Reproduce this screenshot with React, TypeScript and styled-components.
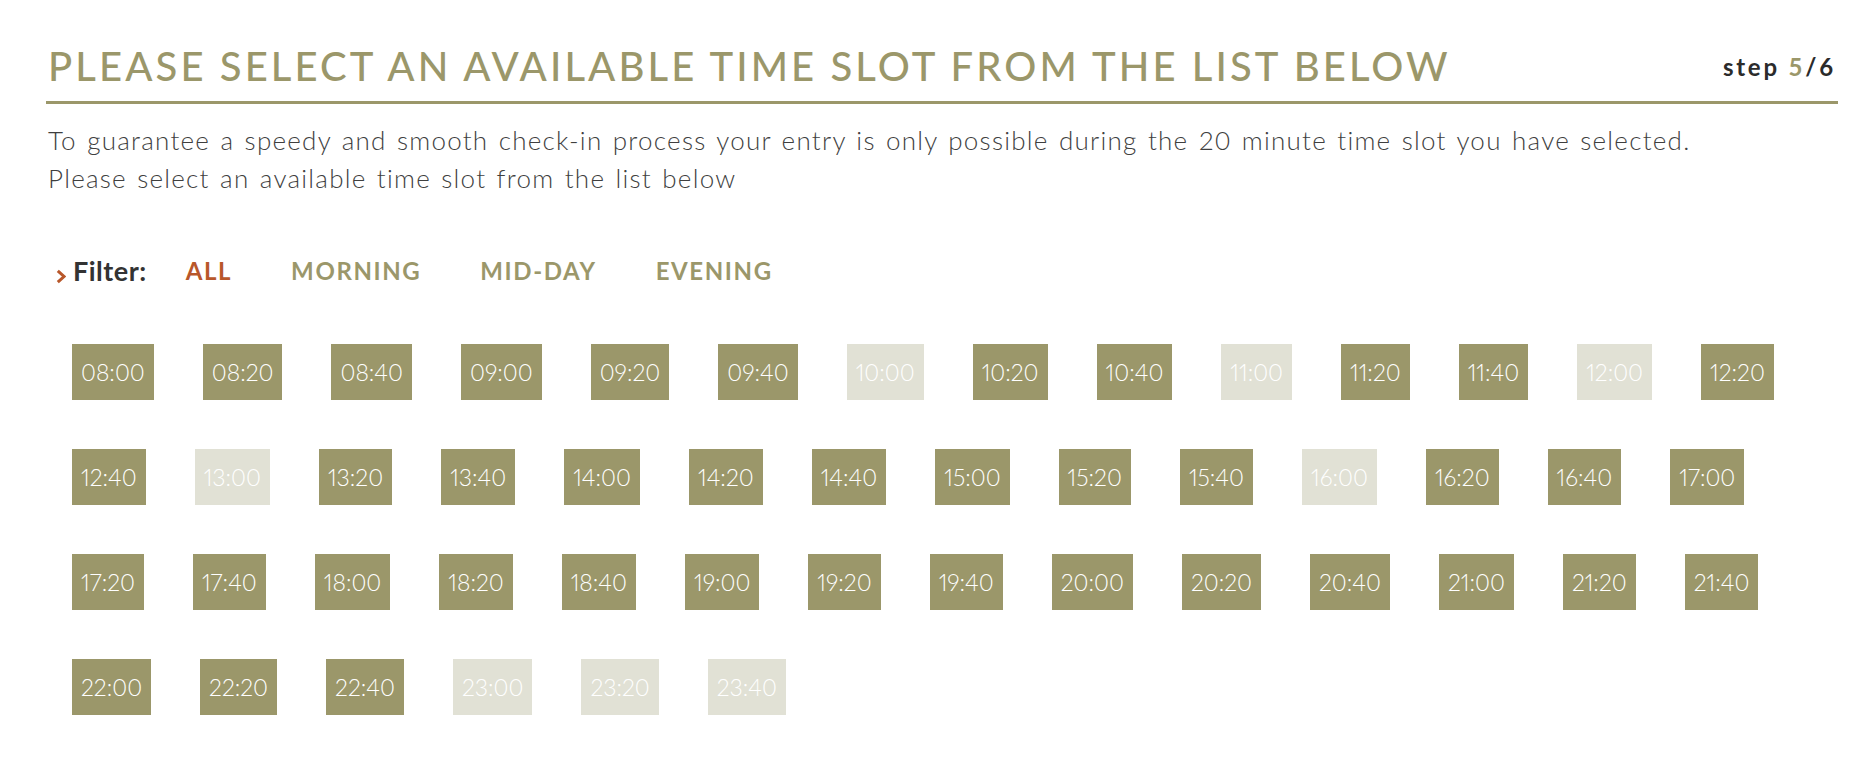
import styled, { createGlobalStyle } from "styled-components";

const GlobalStyle = createGlobalStyle`
  body {
    margin: 0;
    background: #ffffff;
    font-family: "Lato", "Open Sans", sans-serif;
  }
`;

const OLIVE = "#9b976a";
const PALE = "#e1e1d5";
const RUST = "#b8572a";

const Page = styled.div`
  padding: 42px 34px 60px 46px;
`;

const Header = styled.div`
  display: flex;
  justify-content: space-between;
  align-items: baseline;
  padding: 0 2px 11px 2px;
  border-bottom: 3px solid ${OLIVE};
`;

const Title = styled.h1`
  margin: 0;
  font-size: 40px;
  line-height: 48px;
  font-weight: 500;
  letter-spacing: 3.1px;
  text-transform: uppercase;
  color: ${OLIVE};
`;

const Step = styled.div`
  align-self: center;
  font-size: 24px;
  line-height: 29px;
  font-weight: 700;
  letter-spacing: 2.8px;
  color: #2b2b2b;
  span {
    color: ${OLIVE};
  }
`;

const Intro = styled.p`
  margin: 17px 0 0 2px;
  font-size: 26px;
  line-height: 38px;
  font-weight: 300;
  letter-spacing: 1.25px;
  word-spacing: 2px;
  color: #3f3f3f;
`;

const FilterBar = styled.div`
  display: flex;
  align-items: center;
  margin: 57px 0 0 10px;
  height: 32px;
`;

const Chevron = styled.svg`
  width: 10px;
  height: 15px;
  margin: 12px 7px 0 0;
`;

const FilterLabel = styled.span`
  font-size: 27px;
  font-weight: 700;
  letter-spacing: 0.5px;
  color: #333333;
  margin-right: 39px;
`;

const FilterOption = styled.span<{ $active?: boolean }>`
  font-size: 24px;
  font-weight: 700;
  letter-spacing: 1.6px;
  text-transform: uppercase;
  color: ${(p) => (p.$active ? RUST : OLIVE)};
  margin-right: 59px;
  cursor: pointer;
`;

const Slots = styled.div`
  display: flex;
  flex-direction: column;
  gap: 49px;
  margin: 58px 0 0 26px;
`;

const SlotRow = styled.div`
  display: flex;
  gap: 49px;
`;

const Slot = styled.div<{ $disabled?: boolean }>`
  display: flex;
  align-items: center;
  justify-content: center;
  height: 56px;
  padding: 0 9px;
  font-size: 23px;
  font-weight: 300;
  font-variant-numeric: proportional-nums;
  color: #ffffff;
  background: ${(p) => (p.$disabled ? PALE : OLIVE)};
  cursor: ${(p) => (p.$disabled ? "default" : "pointer")};
`;

const disabled = new Set(["10:00", "11:00", "12:00", "13:00", "16:00", "23:00", "23:20", "23:40"]);

const times: string[] = [];
for (let h = 8; h < 24; h++) {
  for (const m of ["00", "20", "40"]) {
    times.push(`${String(h).padStart(2, "0")}:${m}`);
  }
}

const rows: string[][] = [];
for (let i = 0; i < times.length; i += 14) {
  rows.push(times.slice(i, i + 14));
}

export default function App() {
  return (
    <>
      <GlobalStyle />
      <Page>
        <Header>
          <Title>Please select an available time slot from the list below</Title>
          <Step>
            step <span>5</span>/6
          </Step>
        </Header>
        <Intro>
          To guarantee a speedy and smooth check-in process your entry is only possible during the 20 minute time slot you have selected.
          <br />
          Please select an available time slot from the list below
        </Intro>
        <FilterBar>
          <Chevron viewBox="0 0 10 15">
            <polyline points="1.8,1.8 8,7.5 1.8,13.2" fill="none" stroke={RUST} strokeWidth="3" />
          </Chevron>
          <FilterLabel>Filter:</FilterLabel>
          <FilterOption $active>All</FilterOption>
          <FilterOption>Morning</FilterOption>
          <FilterOption>Mid-day</FilterOption>
          <FilterOption>Evening</FilterOption>
        </FilterBar>
        <Slots>
          {rows.map((row, i) => (
            <SlotRow key={i}>
              {row.map((t) => (
                <Slot key={t} $disabled={disabled.has(t)}>
                  {t}
                </Slot>
              ))}
            </SlotRow>
          ))}
        </Slots>
      </Page>
    </>
  );
}
